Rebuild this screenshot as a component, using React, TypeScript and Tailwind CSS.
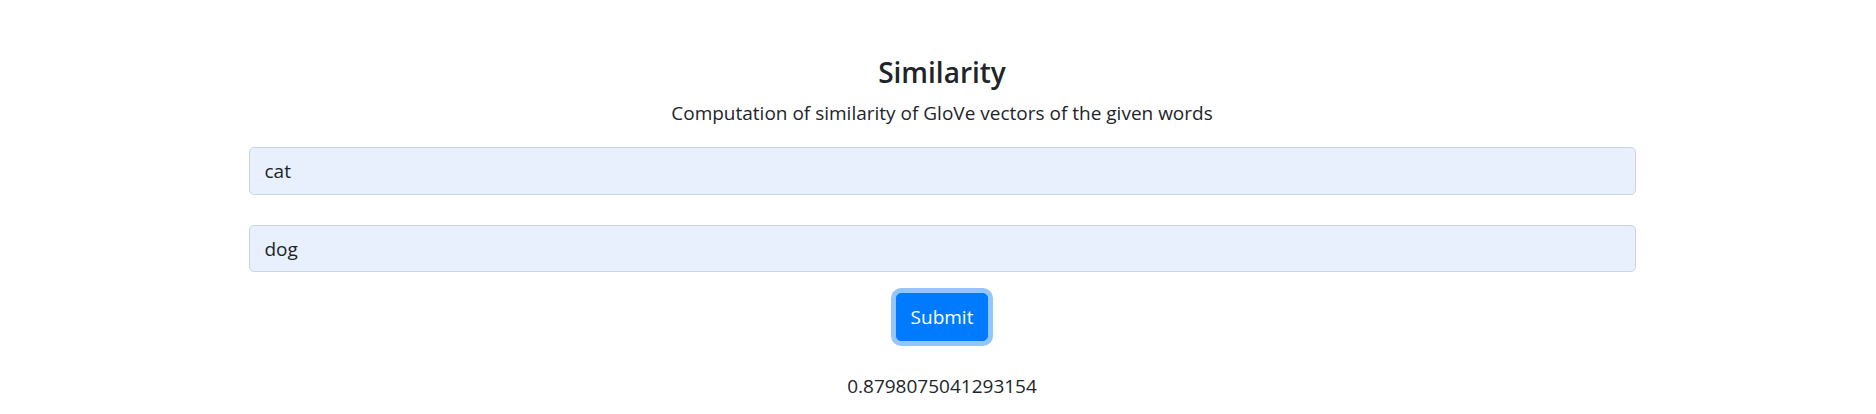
export default function App() {
  return (
    <div className="min-h-[414px] bg-white font-['Open_Sans',sans-serif] text-[#212529] pl-[8px]">
      <div className="mx-auto w-[1387px] flex flex-col items-center pt-[54px]">
        <h4 className="text-[28px] font-semibold leading-[36px]">Similarity</h4>
        <p className="text-[19px] leading-[30px] mt-[8px]">
          Computation of similarity of GloVe vectors of the given words
        </p>
        <div className="w-full mt-[19px] flex flex-col gap-[30px]">
          <input
            defaultValue="cat"
            className="w-full h-[48px] px-[15px] text-[19px] bg-[#e8f0fe] border border-[#ced4da] rounded-[5px] outline-none"
          />
          <input
            defaultValue="dog"
            className="w-full h-[47px] px-[15px] text-[19px] bg-[#e8f0fe] border border-[#ced4da] rounded-[5px] outline-none"
          />
        </div>
        <button className="mt-[21px] h-[48px] px-[14px] text-[19px] text-white bg-[#007bff] rounded-[5px] border border-[#007bff] ring-[5px] ring-[#93c6ff]">
          Submit
        </button>
        <div className="mt-[30px] text-[19px] leading-[30px]">0.8798075041293154</div>
      </div>
    </div>
  );
}
